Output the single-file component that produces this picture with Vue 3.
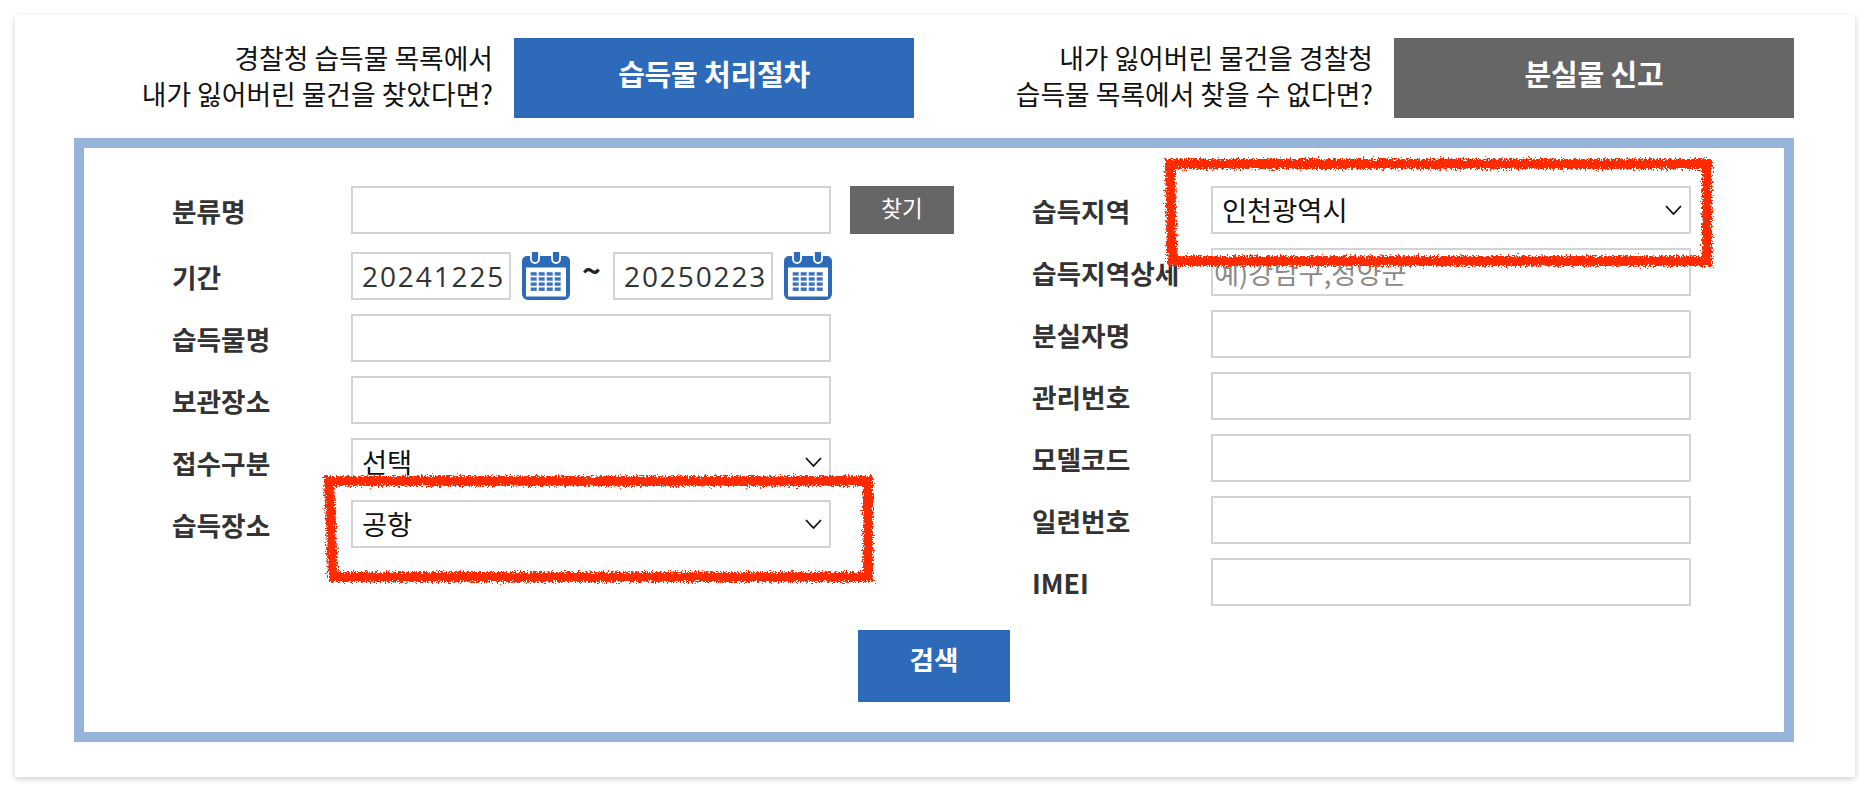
<script setup>
const leftFields = [
  { label: '습득물명', type: 'input' },
  { label: '보관장소', type: 'input' },
  { label: '접수구분', type: 'select', value: '선택' },
  { label: '습득장소', type: 'select', value: '공항' },
]
const rightFields = [
  { label: '습득지역', type: 'select', value: '인천광역시' },
  { label: '습득지역상세', type: 'input', placeholder: '예)강남구,청양군' },
  { label: '분실자명', type: 'input' },
  { label: '관리번호', type: 'input' },
  { label: '모델코드', type: 'input' },
  { label: '일련번호', type: 'input' },
  { label: 'IMEI', type: 'input' },
]
const cells = []
for (let r = 0; r < 4; r++) for (let c = 0; c < 4; c++) cells.push({ x: 8.7 + c * 8, y: 20.2 + r * 5.1 })
</script>

<template>
  <div class="page">
    <main class="card">
      <section class="cta-row">
        <div class="cta">
          <p class="cta-text">경찰청 습득물 목록에서<br />내가 잃어버린 물건을 찾았다면?</p>
          <a class="cta-btn blue">습득물 처리절차</a>
        </div>
        <div class="cta">
          <p class="cta-text">내가 잃어버린 물건을 경찰청<br />습득물 목록에서 찾을 수 없다면?</p>
          <a class="cta-btn gray">분실물 신고</a>
        </div>
      </section>

      <form class="box" @submit.prevent>
        <div class="cols">
          <div class="col">
            <div class="row row-first">
              <label class="label">분류명</label>
              <input class="field" type="text" />
              <button class="find" type="button">찾기</button>
            </div>
            <div class="row">
              <label class="label">기간</label>
              <input class="field date" type="text" value="20241225" />
              <svg class="cal" viewBox="0 0 48 48">
                <path fill="#2d6bba" d="M5 4h4v-4h8v4h13v-4h8v4h5a5 5 0 0 1 5 5v33a6 6 0 0 1-6 6H6a6 6 0 0 1-6-6V9a5 5 0 0 1 5-5z" />
                <path fill="none" stroke="#fff" stroke-width="1.8" d="M9 0v7a4 4 0 0 0 8 0V0M30 0v7a4 4 0 0 0 8 0V0" />
                <rect x="4" y="15.5" width="40" height="29" fill="#fff" />
                <rect v-for="(c, i) in cells" :key="i" :x="c.x" :y="c.y" width="6" height="3.4" fill="#3a74bf" />
              </svg>
              <span class="tilde">~</span>
              <input class="field date" type="text" value="20250223" />
              <svg class="cal" viewBox="0 0 48 48">
                <path fill="#2d6bba" d="M5 4h4v-4h8v4h13v-4h8v4h5a5 5 0 0 1 5 5v33a6 6 0 0 1-6 6H6a6 6 0 0 1-6-6V9a5 5 0 0 1 5-5z" />
                <path fill="none" stroke="#fff" stroke-width="1.8" d="M9 0v7a4 4 0 0 0 8 0V0M30 0v7a4 4 0 0 0 8 0V0" />
                <rect x="4" y="15.5" width="40" height="29" fill="#fff" />
                <rect v-for="(c, i) in cells" :key="i" :x="c.x" :y="c.y" width="6" height="3.4" fill="#3a74bf" />
              </svg>
            </div>
            <div v-for="f in leftFields" :key="f.label" class="row">
              <label class="label">{{ f.label }}</label>
              <input v-if="f.type === 'input'" class="field" type="text" />
              <div v-else class="select-wrap">
                <select class="field select"><option>{{ f.value }}</option></select>
                <svg class="chev" viewBox="0 0 17 10"><path d="M1 1l7.5 8L16 1" fill="none" stroke="#111" stroke-width="1.8" /></svg>
              </div>
            </div>
          </div>

          <div class="col">
            <div v-for="f in rightFields" :key="f.label" class="row">
              <label class="label">{{ f.label }}</label>
              <input v-if="f.type === 'input'" class="field" type="text" :placeholder="f.placeholder" />
              <div v-else class="select-wrap">
                <select class="field select"><option>{{ f.value }}</option></select>
                <svg class="chev" viewBox="0 0 17 10"><path d="M1 1l7.5 8L16 1" fill="none" stroke="#111" stroke-width="1.8" /></svg>
              </div>
            </div>
          </div>
        </div>
        <div class="actions">
          <button class="search" type="submit">검색</button>
        </div>
      </form>

      <svg class="marks" width="1870" height="792" viewBox="0 0 1870 792">
        <defs>
          <filter id="crayon" x="-5%" y="-10%" width="110%" height="120%">
            <feTurbulence type="fractalNoise" baseFrequency="0.6" numOctaves="3" seed="4" result="n" />
            <feDisplacementMap in="SourceGraphic" in2="n" scale="9" />
          </filter>
        </defs>
        <g filter="url(#crayon)" fill="none" stroke="#ff2a00" stroke-width="10" stroke-linejoin="miter">
          <path d="M1170 164H1707V261H1172Z" />
          <path d="M329 481H868V577H333Z" />
        </g>
      </svg>
    </main>
  </div>
</template>

<style>
html, body { margin: 0; background: #fff; }
</style>

<style scoped>
.page {
  width: 1870px;
  height: 792px;
  padding: 15px;
  box-sizing: border-box;
  background: #fff;
  font-family: "Noto Sans CJK KR", "Noto Sans", sans-serif;
  overflow: hidden;
}
.card {
  width: 1840px;
  height: 762px;
  box-sizing: border-box;
  padding: 23px 61px 0 59px;
  background: #fff;
  box-shadow: 0 2px 6px rgba(0, 0, 0, 0.2);
}
.marks { position: absolute; left: 0; top: 0; pointer-events: none; }
.cta-row { display: grid; grid-template-columns: 840px 840px; column-gap: 40px; }
.cta { display: flex; justify-content: flex-end; align-items: center; gap: 21px; height: 80px; }
.cta-text {
  margin: 0 0 4px;
  text-align: right;
  font-size: 26.8px;
  line-height: 36.5px;
  color: #111;
}
.cta-btn {
  width: 400px;
  height: 80px;
  display: flex;
  align-items: center;
  justify-content: center;
  color: #fff;
  font-size: 29px;
  font-weight: 700;
  letter-spacing: -0.2px;
  padding-bottom: 11px;
  box-sizing: border-box;
}
.blue { background: #2d6bba; }
.gray { background: #666; }
.box {
  margin-top: 20px;
  width: 1720px;
  height: 604px;
  box-sizing: border-box;
  border: 10px solid #96b4dc;
  padding: 38px 0 0 88px;
}
.cols { display: grid; grid-template-columns: 860px 1fr; }
.col { display: flex; flex-direction: column; gap: 14px; }
.row { display: flex; align-items: center; height: 48px; }
.row-first { margin-bottom: 4px; }
.label {
  width: 179px;
  flex: none;
  font-size: 26.7px;
  font-weight: 700;
  color: #333;
  white-space: nowrap;
}
.field {
  width: 480px;
  height: 48px;
  box-sizing: border-box;
  border: 2px solid #d3d3d3;
  background: #fff;
  padding: 0 1px;
  margin: 0;
  font-family: inherit;
  font-size: 27.3px;
  color: #222;
  outline: none;
  border-radius: 0;
}
.field::placeholder { color: #8a8a8a; opacity: 1; }
.date {
  width: 160px;
  padding: 0 0 0 9px;
  font-family: "Open Sans", "Noto Sans", sans-serif;
  font-size: 28px;
  letter-spacing: 1.9px;
  color: #333;
}
.cal { width: 48px; height: 48px; margin-left: 11px; flex: none; }
.tilde {
  width: 43px;
  text-align: center;
  font-size: 32px;
  font-weight: 700;
  color: #222;
  position: relative;
  top: -7px;
}
.find {
  width: 104px;
  height: 48px;
  margin: 0 0 0 19px;
  border: 0;
  background: #666;
  color: #fff;
  font-family: inherit;
  font-size: 22.5px;
  padding: 0 0 6px;
}
.select-wrap { position: relative; width: 480px; height: 48px; }
.select {
  appearance: none;
  -webkit-appearance: none;
  padding-left: 9px;
  padding-bottom: 2px;
  color: #111;
  display: block;
}
.chev { position: absolute; right: 9px; top: 19px; width: 17px; height: 10px; pointer-events: none; }
.actions { display: flex; justify-content: center; margin: 24px 0 0 -88px; }
.search {
  width: 152px;
  height: 72px;
  border: 0;
  background: #2d6bba;
  color: #fff;
  font-family: inherit;
  font-size: 26.5px;
  font-weight: 700;
  padding: 0 0 16px;
}
</style>
